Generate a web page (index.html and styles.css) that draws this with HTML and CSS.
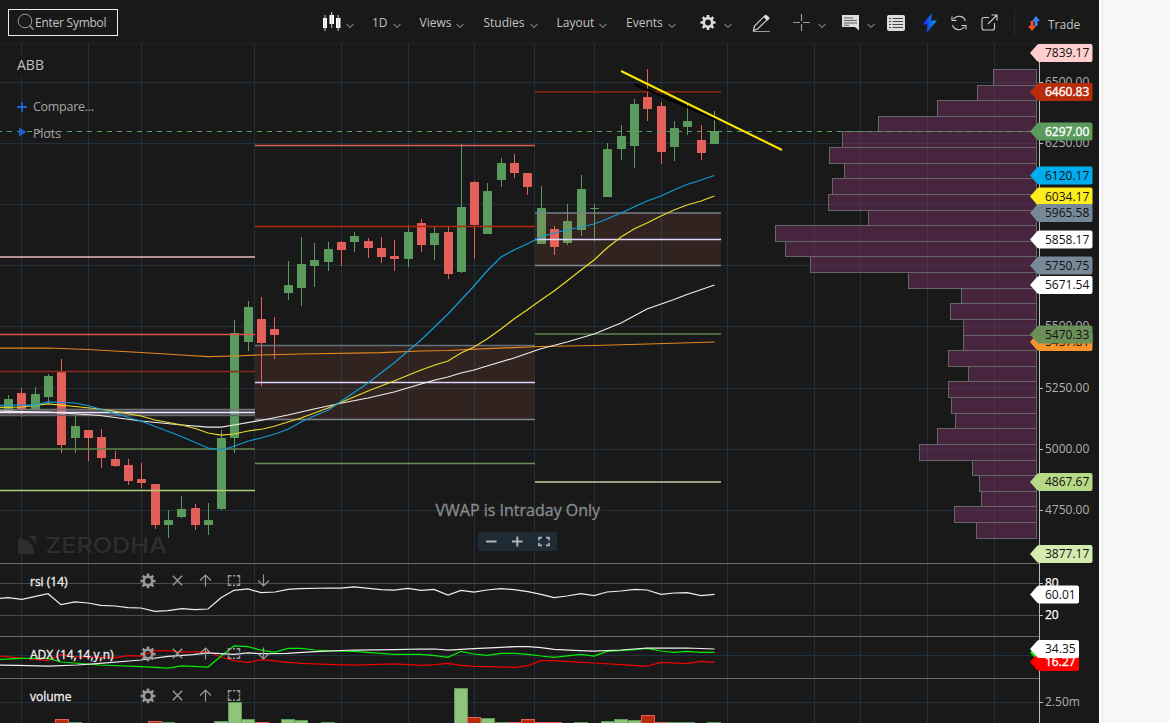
FILE: index.html
```
<!DOCTYPE html>
<html lang="en">
<head>
    <meta charset="UTF-8" />
    <meta name="viewport" content="width=device-width, initial-scale=1.0" />
    <title>ABB Chart</title>
    <link rel="stylesheet" href="styles.css">
</head>
<body>
    <svg class="defs" width="0" height="0">
        <symbol id="chevron" viewBox="0 0 8 6"><path d="M.5 1 L4 4.5 L7.5 1" fill="none" stroke="#777" stroke-width="1.1"/></symbol>
        <symbol id="gear" viewBox="-8 -8 16 16">
            <path fill="currentColor" fill-rule="evenodd" d="M-1.3 -7h2.6v2.1l1.6.7 1.5-1.5 1.8 1.8-1.5 1.5.7 1.6h2.1v2.6h-2.1l-.7 1.6 1.5 1.5-1.8 1.8-1.5-1.5-1.6.7v2.1h-2.6v-2.1l-1.6-.7-1.5 1.5-1.8-1.8 1.5-1.5-.7-1.6h-2.1v-2.6h2.1l.7-1.6-1.5-1.5 1.8-1.8 1.5 1.5 1.6-.7zM0 -2.4a2.9 2.9 0 1 0 0 5.8a2.9 2.9 0 1 0 0-5.8z"/>
        </symbol>
        <symbol id="close" viewBox="-8 -8 16 16"><path d="M-4.7 -4.7L4.7 4.7M4.7 -4.7L-4.7 4.7" stroke="currentColor" stroke-width="1.4"/></symbol>
        <symbol id="up" viewBox="-8 -8 16 16"><path d="M0 6V-5.5M-5.5 0L0 -5.5L5.5 0" fill="none" stroke="currentColor" stroke-width="1.2"/></symbol>
        <symbol id="down" viewBox="-8 -8 16 16"><path d="M0 -6V5.5M-5.5 0L0 5.5L5.5 0" fill="none" stroke="currentColor" stroke-width="1.2"/></symbol>
        <symbol id="expand" viewBox="-8 -8 16 16"><path d="M-5.5 -2V-4.7H-2.5M-1 -4.7H1M2.5 -4.7H5.5V-2M5.5 -1V1M5.5 2V4.7H2.5M1 4.7H-1M-2.5 4.7H-5.5V2M-5.5 1V-1" fill="none" stroke="currentColor" stroke-width="1.5"/></symbol>
        <symbol id="expand-small" viewBox="-8 -8 16 16"><path d="M-5 -1.3V-3.8H-2M2 -3.8H5V-1.3M5 1.3V3.8H2M-2 3.8H-5V1.3" fill="none" stroke="currentColor" stroke-width="1.7"/></symbol>
    </svg>

    <div class="app">
        <header class="toolbar">
            <div class="search">
                <svg width="18" height="18" viewBox="0 0 18 18"><circle cx="8" cy="8" r="6.8" fill="none" stroke="#999" stroke-width="1"/><path d="M12.7 12.7L16.5 16.5" stroke="#999" stroke-width="1.3"/></svg>
                <span>Enter Symbol</span>
            </div>
            <div class="item">
                <svg width="19" height="20" viewBox="0 0 19 20" fill="#fff"><path d="M1 6h4v10h-4zM7.5 3h4.500v9h-4.500zM14 6h4.500v10h-4.500z"/><path d="M3 3v16M9.700 0v16M16.200 3v16" stroke="#ccc" stroke-width="1"/></svg>
                <svg class="chev"><use href="#chevron"/></svg>
            </div>
            <div class="item"><span>1D</span><svg class="chev"><use href="#chevron"/></svg></div>
            <div class="item"><span>Views</span><svg class="chev"><use href="#chevron"/></svg></div>
            <div class="item"><span>Studies</span><svg class="chev"><use href="#chevron"/></svg></div>
            <div class="item"><span>Layout</span><svg class="chev"><use href="#chevron"/></svg></div>
            <div class="item"><span>Events</span><svg class="chev"><use href="#chevron"/></svg></div>
            <div class="item wide">
                <svg class="gear" width="16" height="16"><use href="#gear"/></svg>
                <svg class="chev"><use href="#chevron"/></svg>
            </div>
            <div class="item low">
                <svg width="19" height="18" viewBox="0 0 19 18"><path d="M1.500 16.500l1-4.500L12.500 2l3.500 3L5.500 15z" fill="none" stroke="#ccc" stroke-width="1.200"/><path d="M11.500 3l2.500-2.500 3.800 3.500-2.500 2.800z" fill="#ddd"/><path d="M1 17.500H18" stroke="#999"/></svg>
            </div>
            <div class="item wide low">
                <svg width="17" height="17" viewBox="0 0 17 17"><path d="M0 8.500h7M10 8.500h7M8.500 0v7M8.500 10v7" stroke="#999" stroke-width="1.200"/></svg>
                <svg class="chev"><use href="#chevron"/></svg>
            </div>
            <div class="item wide low">
                <svg width="17" height="16" viewBox="0 0 17 16"><path d="M0 0h17v15.500l-4-3.500H0z" fill="#ddd"/><path d="M2 3h9M2 5.500h13M2 8h13M2 10.300h5" stroke="#555" stroke-width=".9"/></svg>
                <svg class="chev"><use href="#chevron"/></svg>
            </div>
            <div class="item low">
                <svg width="18" height="16" viewBox="0 0 18 16"><rect width="18" height="16" rx="2" fill="#ddd"/><path d="M5.500 3.500h10.500M5.500 6.500h10.500M5.500 9.500h10.500M5.500 12.500h10.500M2 3.500h2M2 6.500h2M2 9.500h2M2 12.500h2" stroke="#444"/></svg>
            </div>
            <div class="item low">
                <svg class="bolt" width="16" height="20" viewBox="0 0 16 20"><defs><linearGradient id="boltFill"><stop offset="0" stop-color="#1717ee"/><stop offset="1" stop-color="#08a4e8"/></linearGradient></defs><path d="M10 0L0 11.500h5.500L4.500 20L15 7.500H9z" fill="url(#boltFill)"/></svg>
            </div>
            <div class="item low">
                <svg width="16" height="16" viewBox="0 0 16 16" fill="none" stroke="#ccc" stroke-width="1.100"><path d="M14.500 6A6.800 6.800 0 0 0 2.500 4.200M1 1.500V5.500H5.500M1.500 10A6.800 6.800 0 0 0 13.500 11.800M15 14.500V10.500H10.500"/></svg>
            </div>
            <div class="item low">
                <svg width="17" height="17" viewBox="0 0 17 17" fill="none" stroke="#ccc" stroke-width="1.100"><path d="M8 3.500H3Q1 3.500 1 5.500V14Q1 16 3 16H11.500Q13.500 16 13.500 14V9M7 10L16 1M10.500 1H16V6.500"/></svg>
            </div>
            <div class="item trade">
                <svg width="12" height="17" viewBox="0 0 12 17"><path d="M8 1l4 5h-2.500v5h-3V6H4z" fill="#3b82f6"/><path d="M4 16L0 11h2.500V6h3v5H8z" fill="#f4511e"/></svg>
                <span>Trade</span>
            </div>
        </header>
        <svg id="chart" class="chart" width="1099" height="679" viewBox="0 44 1099 679"></svg>
    </div>

    <script src="chart.js"></script>
</body>
</html>
```
FILE: styles.css
```
* {
    box-sizing: border-box;
    margin: 0;
    padding: 0;
}

body {
    background: #f7f7f7;
    font-family: 'Open Sans', 'Noto Sans', sans-serif;
    font-size: 12px;
    overflow: hidden;
}

.defs {
    display: block;
}

.app {
    width: 1101px;
    height: 723px;
    background: #191919;
    border-right: 2px solid #fff;
    box-shadow: 0 0 3px rgba(0, 0, 0, 0.1);
}

.toolbar {
    display: grid;
    grid-template-columns: 314px 50px 47.5px 64px 73px 69.5px 74px 52px 41px 49px 45px 35px 29px 30px 33px 1fr;
    height: 44px;
    padding-left: 8px;
    padding-top: 1px;
    align-items: center;
    color: #c2c2c2;
    border-bottom: 1px solid #242424;
}

.search {
    display: flex;
    align-items: center;
    width: 110px;
    height: 27px;
    padding-left: 8px;
    border: 1px solid #eee;
}

.search svg {
    flex: none;
}

.search span {
    white-space: nowrap;
    font-size: 12px;
    letter-spacing: -0.25px;
    padding-top: 1px;
}

.item {
    display: flex;
    align-items: center;
    gap: 5px;
    height: 27px;
    padding-bottom: 1px;
}

.item span {
    padding-top: 2px;
}

.item.wide {
    gap: 8px;
}

.item.low {
    padding-top: 2px;
}

.chev {
    flex: none;
    width: 8px;
    height: 6px;
    margin-top: 8px;
}

.item.low .chev {
    margin-top: 6px;
}

.gear {
    color: #ddd;
}

.item.trade {
    gap: 8px;
    height: 25px;
    padding-left: 13px;
    padding-top: 4px;
    border-left: 1px solid #292929;
}

.chart {
    display: block;
}

.chart text {
    font-family: 'Open Sans', 'Noto Sans', sans-serif;
    font-size: 12px;
}

.grid {
    stroke: #20303c;
}

.separator {
    stroke: #6a6a6a;
}

.level {
    stroke: #4a4a4a;
}

.price-level {
    stroke-width: 1.3;
}

.axis-line {
    stroke: #bbb;
}

.axis-text {
    fill: #b0b0b0;
}

.axis-text.bright {
    fill: #fff;
    stroke: #fff;
    stroke-width: 0.25;
}

.curve {
    fill: none;
    stroke-width: 1.25;
}

.band {
    fill: rgba(255, 130, 100, 0.1);
}

.profile {
    fill: rgba(124, 52, 104, 0.47);
    stroke: #666;
}

.last-price {
    stroke: #5b9a5d;
    stroke-dasharray: 5 5;
}

.watermark {
    fill: #2e2e2e;
}

.chart .brand {
    font-family: 'Inter', sans-serif;
    font-size: 22px;
    font-weight: 500;
}

.chart .symbol {
    fill: #c0c0c0;
    font-size: 14px;
}

.legend-bg {
    fill: #191919;
}

.chart .legend {
    fill: #a5a5a5;
    font-size: 12.5px;
}

.chart .notice {
    fill: #8a8a8a;
    stroke: #8a8a8a;
    stroke-width: 0.3;
    font-size: 16px;
}

.chart .pane-title {
    fill: #f0f0f0;
    stroke: #f0f0f0;
    stroke-width: 0.3;
}

.pane-icon {
    color: #999;
}

.zoom-box {
    fill: #1e2b35;
}

.zoom-icon {
    color: #aeb4b8;
}
```
FILE: chart.js
```
const NS = 'http://www.w3.org/2000/svg';
const chart = document.getElementById('chart');
const GREEN = '#5b9a5d';
const RED = '#e35f5a';

function add(tag, attrs, text) {
    const node = document.createElementNS(NS, tag);
    Object.keys(attrs).forEach(k => node.setAttribute(k, attrs[k]));
    if (text) node.textContent = text;
    chart.appendChild(node);
    return node;
}

function line(x1, y1, x2, y2, attrs) {
    add('line', { x1, y1, x2, y2, ...attrs });
}

function curve(points, stroke) {
    add('polyline', { points, stroke, class: 'curve' });
}

// grid
[21.5, 88.5, 141.5, 254.5, 341.5, 408.5, 474.5, 534.5, 594.5, 661.5, 727.5, 814.5, 860.5, 927.5, 994.5].forEach(x => {
    line(x, 44, x, 562, { class: 'grid' });
    line(x, 564, x, 723, { class: 'grid' });
});
const prices = [[82.5, '6500.00'], [143.5, '6250.00'], [204.5, ''], [265.5, ''], [326.5, '5500.00'], [388.5, '5250.00'], [449.5, '5000.00'], [510.5, '4750.00'], [655.5, ''], [702.5, '2.50m']];
prices.forEach(([y, label]) => {
    line(0, y, 1039, y, { class: 'grid' });
    if (label) {
        line(1040, y, 1043, y, { class: 'axis-line' });
        add('text', { x: 1045, y: y + 3.5, class: 'axis-text' }, label);
    }
});
[583.5, 615.5].forEach(y => line(0, y, 1039, y, { class: 'level' }));
[563.5, 636.5, 678.5].forEach(y => line(0, y, 1039, y, { class: 'separator' }));

// broker watermark
add('path', { d: 'M18 538Q33 539 35 554H18zM28 536H36V545Q34 539 28 536z', class: 'watermark' });
add('text', { x: 45, y: 553, textLength: 122, lengthAdjust: 'spacingAndGlyphs', class: 'watermark brand' }, 'ZERODHA');

// x, high, body top, body bottom, low, up
const candles = [
    [8, 395, 399, 412, 412, 1], [21, 388, 393, 409, 417, 0], [35, 387, 394, 409, 410, 1], [48, 374, 376, 397, 403, 1],
    [61, 359, 372, 445, 453, 0], [75, 415, 426, 438, 453, 1], [88, 430, 430, 438, 461, 0], [101, 429, 437, 458, 468, 0],
    [115, 451, 459, 466, 467, 0], [128, 459, 465, 481, 485, 0], [141, 463, 479, 483, 488, 0], [155, 484, 484, 525, 529, 0],
    [168, 510, 520, 525, 538, 1], [181, 496, 509, 517, 518, 1], [195, 504, 508, 525, 530, 0], [208, 503, 520, 525, 535, 1],
    [221, 430, 438, 509, 510, 1], [234, 320, 333, 438, 453, 1], [248, 301, 307, 342, 351, 1], [261, 297, 319, 343, 386, 0],
    [274, 317, 329, 335, 359, 0], [288, 261, 285, 293, 300, 1], [301, 237, 264, 288, 306, 1], [314, 243, 260, 266, 287, 1],
    [328, 242, 249, 262, 271, 1], [341, 241, 242, 250, 266, 0], [354, 232, 236, 242, 252, 1], [368, 238, 241, 248, 258, 0],
    [381, 237, 248, 257, 263, 0], [394, 240, 256, 259, 271, 0], [408, 225, 232, 259, 267, 1], [421, 219, 223, 245, 252, 0],
    [434, 227, 233, 245, 260, 1], [448, 227, 232, 274, 279, 0], [461, 144, 207, 272, 273, 1], [474, 181, 182, 225, 259, 0],
    [487, 183, 191, 234, 234, 1], [501, 158, 163, 180, 187, 1], [514, 154, 163, 173, 178, 0], [527, 173, 173, 187, 195, 0],
    [541, 186, 208, 244, 244, 1], [554, 226, 229, 247, 255, 0], [567, 204, 221, 243, 245, 1], [581, 175, 189, 230, 236, 1],
    [594, 204, 208, 209, 241, 1], [607, 143, 149, 197, 197, 1], [621, 125, 136, 149, 160, 1], [634, 99, 104, 146, 168, 1],
    [647, 69, 97, 109, 121, 0], [661, 102, 106, 152, 164, 0], [674, 121, 128, 147, 161, 1], [687, 103, 121, 127, 135, 1],
    [701, 125, 140, 153, 160, 0], [714, 111, 131, 144, 144, 1]
];
candles.forEach(([x, high, top, bottom, low, up]) => {
    const fill = up ? GREEN : RED;
    line(x + .5, high, x + .5, low, { stroke: fill });
    add('rect', { x: x - 4, y: top, width: 9, height: bottom - top, rx: .5, fill });
});

// pivot bands and levels
add('rect', { x: 0, y: 409, width: 255, height: 7, fill: 'rgba(140,130,160,.4)' });
add('rect', { x: 255, y: 345, width: 279, height: 75, class: 'band' });
add('rect', { x: 535, y: 213, width: 186, height: 53, class: 'band' });
const levels = [
    [0, 255, 257, '#e8b9bd'], [0, 255, 334.5, '#d8564e'], [0, 255, 371.5, '#8a2a18'], [0, 255, 409.5, '#777'],
    [0, 255, 412.5, '#eee6ff'], [0, 255, 415.5, '#666'], [0, 255, 449, '#5d8549'], [0, 255, 490.5, '#aace7a'],
    [255, 535, 145.5, '#d9605a'], [255, 535, 226.5, '#b0280e'], [255, 535, 345.5, '#667078'], [255, 535, 382.5, '#ded8ff'],
    [255, 535, 419.5, '#7f868b'], [255, 535, 463.5, '#6b8f59'],
    [535, 721, 91.8, '#a3260e'], [535, 721, 213, '#778088'], [535, 721, 239.5, '#ded8ff'], [535, 721, 265.5, '#858b90'],
    [535, 721, 334, '#5d8549'], [535, 721, 482, '#c4cc9d']
];
levels.forEach(([x1, x2, y, stroke]) => line(x1, y, x2, y, { stroke, class: 'price-level' }));

// moving averages
curve('0,348 48,348 88,349.500 141,352.500 182,355 208,356.500 234,356 260,355 301,354 381,352.700 421,351 448,350.500 487,348.700 540,346.500 594,345.500 648,344 714.500,342', '#e8871e');
curve('0,411 48,412 100,415.500 141,421 182,425 208,427 221,427 234,425 263,420 288,415 314,409 342,403 368,398 394,392 421,384 435,380 448,377 461,373 474,370 487,366 514,358 540,349 567,342 594,334 621,323 647,309 674,299.500 687,294.500 714.500,285', '#f0ece8');
curve('0,407.500 22,407 48,404 75,406.500 100,409 113,411 141,416 155,420 182,425 197,429 208,433 221,435 234,434 248,431 263,429 275,426 288,422 301,418 328,408 342,402 368,391 394,381 421,370 435,365 448,361 461,353 474,347 487,339 501,329 514,319 527,310 541,300 554,291 567,281 581,270 594,260 607,248 621,237 634,229 647,223 661,216 674,210 687,205 701,201 714.500,196', '#e8d92a');
curve('0,405.500 22,405 35,405 48,402 75,403 88,405.500 113,413 141,421 167,431 181.500,436.500 208,448 221.500,450 234.500,446 248.500,441 261,438 275,434 288.500,429 301,422 314,416 328.500,410 341.500,401 368,383 394,363 408,351 421,340 434.500,327 448,314 461,300 474,286 487,271 501,257 514,250 527,244 541,237 554,233 567,230 581,227 594,224 607,219 621,213 634,207 647,201 661,196 674,190 687,184.500 701,180 714.500,175.500', '#129ad6');

// volume profile
const profile = [993, 977, 937, 878, 842, 829, 844, 832, 828, 868, 775, 785, 810, 908, 961, 950, 963, 963, 948, 968, 948, 951, 955, 937, 919, 972, 979, 981, 954, 976];
profile.forEach((x, i) => {
    const top = 69.5 + Math.round(15.62 * i);
    const bottom = 69.5 + Math.round(15.62 * (i + 1));
    add('rect', { x: x + .5, y: top, width: 1036 - x, height: bottom - top, class: 'profile' });
});
line(-3, 131.5, 1037, 131.5, { class: 'last-price' });

// trend line
line(634, 84, 717, 120, { stroke: '#000', 'stroke-width': 2 });
line(621, 71, 782, 150, { stroke: '#ffe600', 'stroke-width': 2 });

// rsi
curve('0,598.300 8,597.600 22,599.300 48,593.700 61,604.700 75,602 88,603 101,605.300 115,606 128,607.700 141,608 155,611.300 168,610.700 182,608.700 195,609.700 208,609 221,597.700 234,590.300 248,589 261,592.700 275,592 288,589.300 300,588.700 328,588 341,588 354,587 381,589.700 394,590 408,588.300 421,590.300 434,589.300 448,595 461,590.300 474,592 487,590 501,588.700 514,589.700 528,591.700 541,594.300 554,597.700 567,596 581,593.700 594,595.700 607,592 621,591 635,589.300 647,590 661,594.300 674,593 687,592.700 701,595.700 714.500,594.300', '#eee');

// adx
curve('0,656 22,658 48,660.700 61,654.700 72,656.700 115,657.700 128,655.700 141,656 155,650.700 168,650.700 182,652 208,651.700 221,657 234,660.700 248,662.300 262,659.700 288,662.300 302,663.300 328,664.300 355,665 394,664 421,665.300 435,664.700 448,663.300 461,665.300 474,666.300 515,667.300 528,665.700 541,660.700 554,660.700 581,662.300 594,663 621,664.700 647,666.300 661,662.300 687,663.700 701,661.300 714.500,662.300', '#f00000');
curve('0,659.300 22,658.300 48,658.300 61,662 100,665 141,666.700 168,668 182,666 208,667 221,656.300 234,646 248,646.700 263,650.700 275,652 288,648.300 301,648.300 315,650 328,650.700 355,651.300 394,654.300 421,654.300 435,655.700 448,657.300 461,651.300 474,654 487,655.300 501,653.300 515,653.300 528,654.300 541,656 554,657.300 581,654.300 594,656 607,651.300 635,649.700 647,648.300 661,651 674,652.300 687,651.300 701,652.300 714.500,652.300', '#00ee00');
curve('0,665 17,665.300 48,666 77,665 100,663.300 141,660 168,656.300 193,654.700 208,653 234,654.300 248,653 263,653.700 287,653.300 315,651.700 355,650 394,649.700 421,649 435,649 448,650 474,648.700 501,647.300 515,646.700 528,646.700 541,647.700 554,649.300 574,650.300 594,651 621,650 647,648 687,648 714.500,649', '#eee');

// volume: x, top, up
const volumes = [
    [55, 719, 0], [68, 722, 1], [148, 721, 0], [161, 722, 1], [214, 721, 1], [228, 702, 1], [241, 719, 1], [255, 722, 0],
    [281, 719, 1], [294, 720, 1], [321, 722, 1], [454, 688, 1], [467, 717, 0], [481, 718, 1], [494, 722, 1], [508, 722, 0],
    [521, 719, 0], [534, 722, 0], [548, 722, 0], [574, 722, 1], [601, 721, 1], [614, 719, 1], [627, 720, 1], [641, 715, 0],
    [654, 722, 0], [667, 722, 1], [681, 722, 1], [707, 722, 1]
];
volumes.forEach(([x, top, up]) => {
    add('rect', { x: x + .5, y: top + .5, width: 13, height: 730 - top, fill: up ? '#8fc57b' : '#b82c0c', stroke: up ? GREEN : RED });
});

// price axis
line(1039.5, 44, 1039.5, 723, { class: 'axis-line' });
line(1040, 583.5, 1043, 583.5, { class: 'axis-line' });
line(1040, 615.5, 1043, 615.5, { class: 'axis-line' });
add('text', { x: 1045, y: 587, class: 'axis-text bright' }, '80');
add('text', { x: 1045, y: 619, class: 'axis-text bright' }, '20');

// y, label, background, text colour, right edge
const tags = [
    [53, '7839.17', '#ffcfcf', '#111', 1092.5], [92, '6460.83', '#b82c0c', '#fff', 1092.5], [131.5, '6297.00', '#5b9a5d', '#fff', 1092.5],
    [175.5, '6120.17', '#00adef', '#111', 1092.5], [196.5, '6034.17', '#ffee1f', '#111', 1092.5], [213, '5965.58', '#778899', '#111', 1092.5],
    [239.5, '5858.17', '#ffffff', '#111', 1092.5], [265.5, '5750.75', '#778899', '#111', 1092.5], [285, '5671.54', '#ffffff', '#111', 1092.5],
    [342, '5437.81', '#f7942e', '#111', 1092.5], [334.5, '5470.33', '#6b8f59', '#111', 1092.5], [482, '4867.67', '#b5d985', '#111', 1092.5],
    [554, '3877.17', '#d5eab0', '#111', 1092.5], [594.5, '60.01', '#ffffff', '#111', 1079],
    [652.5, '', '#00ee00', '#111', 1079], [662, '16.27', '#ff0000', '#fff', 1079], [649, '34.35', '#ffffff', '#111', 1079]
];
tags.forEach(([y, label, fill, color, right]) => {
    const t = y - 9;
    const b = y + 9;
    add('path', { d: `M1030 ${y}L1037 ${t + 1}Q1038 ${t} 1040 ${t}H${right - 2}Q${right} ${t} ${right} ${t + 2}V${b - 2}Q${right} ${b} ${right - 2} ${b}H1040Q1038 ${b} 1037 ${b - 1}Z`, fill });
    if (label) add('text', { x: 1045, y: y + 4.3, fill: color, stroke: color, 'stroke-width': color === '#fff' ? .35 : 0 }, label);
});

// legend
add('rect', { x: 16, y: 54, width: 30, height: 23, class: 'legend-bg' });
add('text', { x: 17, y: 70, class: 'symbol' }, 'ABB');
add('path', { d: 'M17 107H27M22 102V112', stroke: '#1b66d8', 'stroke-width': 1.8 });
add('text', { x: 33, y: 111, textLength: 61, class: 'legend' }, 'Compare...');
add('path', { d: 'M19 127.500L26.500 132L19 136.500z', fill: '#1b5fd0' });
add('text', { x: 33, y: 138, textLength: 28, class: 'legend' }, 'Plots');

// pane titles and their buttons
function pane(title, y, icons) {
    add('text', { x: 30, y: y + 5.5, class: 'pane-title' }, title);
    icons.forEach(([id, x]) => add('use', { href: '#' + id, x: x - 8, y: y - 8, width: 16, height: 16, class: 'pane-icon' }));
}
const buttons = [['gear', 148], ['close', 177.5], ['up', 205.5], ['expand', 234], ['down', 263.5]];
pane('rsi (14)', 580.5, buttons);
pane('ADX (14,14,y,n)', 653.5, buttons);
pane('volume', 695.5, buttons.slice(0, 4));

// notice and zoom controls
add('text', { x: 435.5, y: 515.5, class: 'notice' }, 'VWAP is Intraday Only');
add('rect', { x: 478, y: 532, width: 79, height: 19, rx: 2, class: 'zoom-box' });
add('path', { d: 'M486 541.500H496.500M512 541.500H522.500M517.300 536.500V546.500', stroke: '#aeb4b8', 'stroke-width': 2 });
add('use', { href: '#expand-small', x: 536, y: 533.5, width: 16, height: 16, class: 'zoom-icon' });
```
